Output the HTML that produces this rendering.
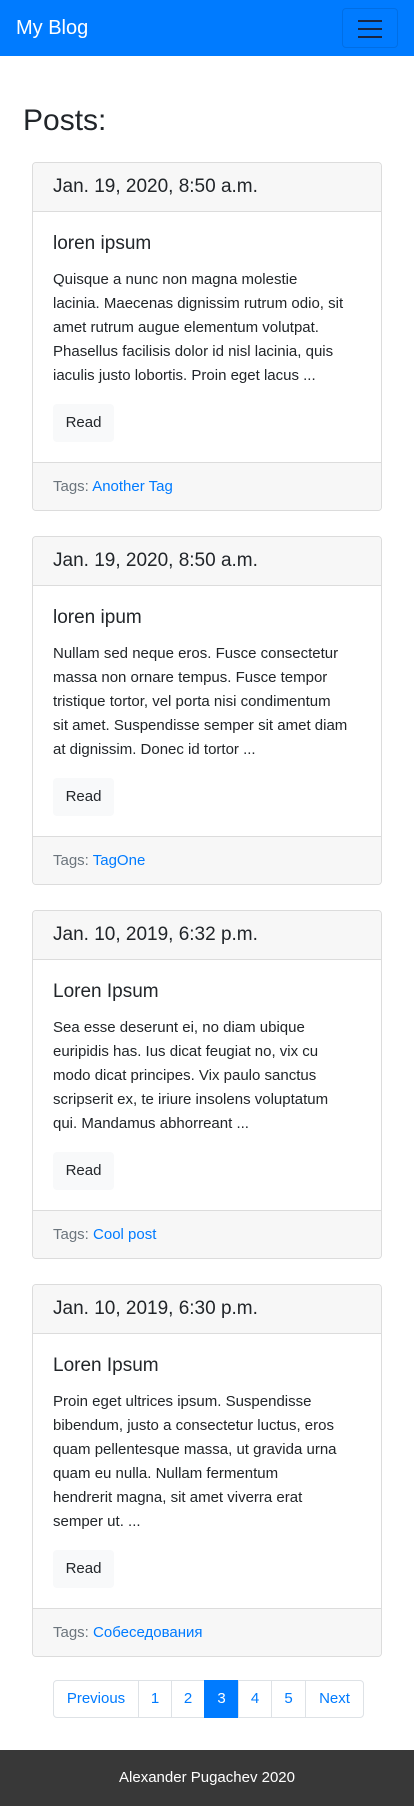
<!DOCTYPE html>
<html><head><meta charset="utf-8"><style>
*{box-sizing:border-box}
body{margin:0;font-family:"Liberation Sans",sans-serif;color:#212529;background:#fff;width:414px}
.nav{height:56px;background:#007bff;position:relative}
.brand{position:absolute;left:16px;top:14px;color:#fff;font-size:20px;line-height:28px}
.tog{position:absolute;left:342px;top:8px;width:56px;height:40px;border:1px solid rgba(0,0,0,.1);border-radius:4px}
.tog i{position:absolute;left:15px;width:24px;height:2px;background:#1a2540}
h2{margin:0;padding:46px 0 0 23px;font-weight:400;font-size:30px;line-height:38px;height:106px}
.card{margin:0 32px 25px 32px;border:1px solid #dcdcdc;border-radius:4px;overflow:hidden}
.hd{background:#f7f7f7;border-bottom:1px solid #dcdcdc;height:49px;padding:0 20px;font-size:19px;line-height:48px}
.bd{padding:20px}
.t{font-size:19px;line-height:24px;margin-bottom:12px}
.p{font-size:15px;line-height:24px;white-space:nowrap;margin-bottom:16px}
.btn{display:inline-block;background:#f8f9fa;border-radius:4px;width:61px;height:38px;text-align:center;line-height:38px;font-size:15px}
.ft{background:#f7f7f7;border-top:1px solid #dcdcdc;height:48px;padding:0 20px;line-height:48px;font-size:15px;color:#6c757d}
.ft a{color:#007bff;text-decoration:none}
.pg{display:flex;margin:0 0 0 53px;height:38px;width:312px;font-size:15px}
.pg span{border:1px solid #dee2e6;margin-left:-1px;color:#007bff;line-height:36px;text-align:center}
.pg .a{background:#007bff;color:#fff;border-color:#007bff}
footer{position:absolute;top:1750px;left:0;width:414px;height:56px;background:#383838;color:#fff;text-align:center;line-height:56px;font-size:15px}
</style></head><body>
<div class="nav"><div class="brand">My Blog</div><div class="tog"><i style="top:11px"></i><i style="top:19px"></i><i style="top:27px"></i></div></div>
<h2>Posts:</h2>
<div class="card"><div class="hd">Jan. 19, 2020, 8:50 a.m.</div><div class="bd"><div class="t">loren ipsum</div><div class="p">Quisque a nunc non magna molestie<br>lacinia. Maecenas dignissim rutrum odio, sit<br>amet rutrum augue elementum volutpat.<br>Phasellus facilisis dolor id nisl lacinia, quis<br>iaculis justo lobortis. Proin eget lacus ...</div><span class="btn">Read</span></div><div class="ft">Tags: <a>Another Tag</a></div></div>
<div class="card"><div class="hd">Jan. 19, 2020, 8:50 a.m.</div><div class="bd"><div class="t">loren ipum</div><div class="p">Nullam sed neque eros. Fusce consectetur<br>massa non ornare tempus. Fusce tempor<br>tristique tortor, vel porta nisi condimentum<br>sit amet. Suspendisse semper sit amet diam<br>at dignissim. Donec id tortor ...</div><span class="btn">Read</span></div><div class="ft">Tags: <a>TagOne</a></div></div>
<div class="card"><div class="hd">Jan. 10, 2019, 6:32 p.m.</div><div class="bd"><div class="t">Loren Ipsum</div><div class="p">Sea esse deserunt ei, no diam ubique<br>euripidis has. Ius dicat feugiat no, vix cu<br>modo dicat principes. Vix paulo sanctus<br>scripserit ex, te iriure insolens voluptatum<br>qui. Mandamus abhorreant ...</div><span class="btn">Read</span></div><div class="ft">Tags: <a>Cool post</a></div></div>
<div class="card" style="margin-bottom:23px"><div class="hd">Jan. 10, 2019, 6:30 p.m.</div><div class="bd"><div class="t">Loren Ipsum</div><div class="p">Proin eget ultrices ipsum. Suspendisse<br>bibendum, justo a consectetur luctus, eros<br>quam pellentesque massa, ut gravida urna<br>quam eu nulla. Nullam fermentum<br>hendrerit magna, sit amet viverra erat<br>semper ut. ...</div><span class="btn">Read</span></div><div class="ft">Tags: <a>Собеседования</a></div></div>
<div class="pg"><span style="width:86px;margin-left:0;border-radius:4px 0 0 4px">Previous</span><span style="width:34px">1</span><span style="width:34px">2</span><span class="a" style="width:35px">3</span><span style="width:34px">4</span><span style="width:35px">5</span><span style="width:59px;border-radius:0 4px 4px 0">Next</span></div>
<footer>Alexander Pugachev 2020</footer>
</body></html>
